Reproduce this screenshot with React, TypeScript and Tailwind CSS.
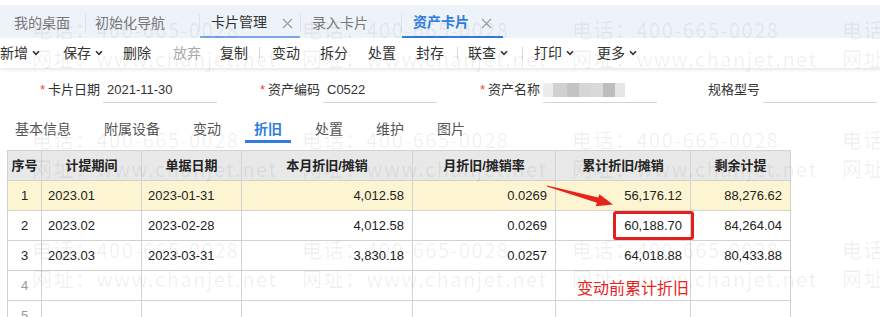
import React from "react";

const Chevron = () => (
  <svg width="8" height="6" viewBox="0 0 8 6" className="ml-[4px]">
    <path d="M1 1.2 L4 4.3 L7 1.2" fill="none" stroke="#333" strokeWidth="1.6" />
  </svg>
);

const Close = ({ color = "#9a9a9a" }: { color?: string }) => (
  <svg width="11" height="11" viewBox="0 0 11 11">
    <path d="M1 1 L10 10 M10 1 L1 10" stroke={color} strokeWidth="1.1" />
  </svg>
);

const ToolSep = ({ ml, mr }: { ml: string; mr: string }) => (
  <div className={`w-px h-[12px] bg-[#d6d6d6] ${ml} ${mr}`} />
);

const Field = ({
  label,
  required,
  children,
}: {
  label: string;
  required?: boolean;
  children?: React.ReactNode;
}) => (
  <div className="w-[220px] flex items-center">
    <div className="w-[100px] flex justify-end items-center text-[13px] text-[#333]">
      {required && <span className="text-[#e8453c] mr-[3px] text-[13px]">*</span>}
      {label}
    </div>
    <div className="ml-[3px] w-[114px] h-[26px] border-b border-[#d4d4d4] flex items-center pl-[4px] text-[13px] text-[#333]">
      {children}
    </div>
  </div>
);

const headers = ["序号", "计提期间", "单据日期", "本月折旧/摊销", "月折旧/摊销率", "累计折旧/摊销", "剩余计提"];
const widths = [34, 100, 100, 171, 143, 135, 100];

const rows = [
  ["1", "2023.01", "2023-01-31", "4,012.58", "0.0269", "56,176.12", "88,276.62"],
  ["2", "2023.02", "2023-02-28", "4,012.58", "0.0269", "60,188.70", "84,264.04"],
  ["3", "2023.03", "2023-03-31", "3,830.18", "0.0257", "64,018.88", "80,433.88"],
  ["4", "", "", "", "", "", ""],
  ["5", "", "", "", "", "", ""],
];

const subTabs = ["基本信息", "附属设备", "变动", "折旧", "处置", "维护", "图片"];

export default function App() {
  return (
    <div className="relative w-[880px] h-[317px] overflow-hidden bg-white font-['Liberation_Sans','Noto_Sans_CJK_SC',sans-serif]">
      <div className="h-[5px] bg-white" />
      {/* page tabs */}
      <div className="h-[33px] bg-[#eef3fa] flex items-stretch text-[14px]">
        <div className="w-[85px] pl-[14px] flex items-center pt-[4px] text-[#777]">我的桌面</div>
        <div className="w-px h-[18px] self-center mt-[3px] bg-[#dce3ee]" />
        <div className="w-[113px] pl-[9px] flex items-center pt-[4px] text-[#777]">初始化导航</div>
        <div className="w-px h-[18px] self-center mt-[3px] bg-[#dce3ee]" />
        <div className="w-[100px] pl-[11px] flex items-center pt-[4px] border-b-[2px] border-[#7aa7e6] text-[#333]">
          卡片管理
          <span className="ml-[15px] mt-[1px]"><Close /></span>
        </div>
        <div className="w-px h-[18px] self-center mt-[3px] bg-[#dce3ee]" />
        <div className="w-[100px] pl-[11px] flex items-center pt-[4px] text-[#777]">录入卡片</div>
        <div className="w-px h-[18px] self-center mt-[3px] bg-[#dce3ee]" />
        <div className="w-[101px] pl-[11px] flex items-center pt-[4px] border-b-[2px] border-[#2f7de1] text-[#2f7de1] font-bold">
          资产卡片
          <span className="ml-[12px] mt-[1px]"><Close /></span>
        </div>
      </div>
      {/* toolbar */}
      <div className="relative z-10 h-[30px] bg-white shadow-[0_2px_3px_rgba(0,0,0,0.09)] flex items-center text-[14px] text-[#333]">
        <div className="flex items-center">新增<Chevron /></div>
        <div className="flex items-center ml-[23px]">保存<Chevron /></div>
        <div className="ml-[20px]">删除</div>
        <div className="ml-[22px] text-[#aaa]">放弃</div>
        <div className="ml-[19px]">复制</div>
        <ToolSep ml="ml-[11px]" mr="mr-[12px]" />
        <div>变动</div>
        <div className="ml-[20px]">拆分</div>
        <div className="ml-[20px]">处置</div>
        <div className="ml-[20px]">封存</div>
        <ToolSep ml="ml-[13px]" mr="mr-[10px]" />
        <div className="flex items-center">联查<Chevron /></div>
        <ToolSep ml="ml-[14px]" mr="mr-[11px]" />
        <div className="flex items-center">打印<Chevron /></div>
        <div className="flex items-center ml-[23px]">更多<Chevron /></div>
      </div>
      {/* form */}
      <div className="flex pt-[9px]">
        <Field label="卡片日期" required>2021-11-30</Field>
        <Field label="资产编码" required>C0522</Field>
        <Field label="资产名称" required>
          <div className="flex h-[14px] -ml-[4px] blur-[0.6px]">
            <div className="w-[10px] bg-[#ececec]" />
            <div className="w-[14px] bg-[#d0d0d0]" />
            <div className="w-[12px] bg-[#c2c4c2]" />
            <div className="w-[12px] bg-[#d6d6d6]" />
            <div className="w-[12px] bg-[#dadada]" />
            <div className="w-[12px] bg-[#bdbdbd]" />
            <div className="w-[10px] bg-[#e6e6e6]" />
          </div>
        </Field>
        <Field label="规格型号" />
      </div>
      {/* sub tabs */}
      <div className="flex pl-[6px] mt-[15px] gap-[15px] text-[14px] text-[#555]">
        {subTabs.map((t) => (
          <div
            key={t}
            className={`h-[25px] px-[9px] flex items-center border-b-[3px] ${
              t === "折旧" ? "border-[#2f7de1] text-[#2f7de1] font-bold" : "border-transparent"
            }`}
          >
            {t}
          </div>
        ))}
      </div>
      {/* table */}
      <div className="pl-[7px] mt-[7px]">
        <table className="table-fixed border-collapse w-[784px] text-[13px] text-[#222]">
          <colgroup>
            {widths.map((w, i) => (
              <col key={i} style={{ width: w }} />
            ))}
          </colgroup>
          <thead>
            <tr className="bg-[#e8e8e8]">
              {headers.map((h) => (
                <th key={h} className="h-[30px] border border-[#d2d2d2] font-bold text-center text-[#222] p-0">
                  {h}
                </th>
              ))}
            </tr>
          </thead>
          <tbody>
            {rows.map((r, ri) => (
              <tr key={ri} className={ri === 0 ? "bg-[#fdf5d2]" : "bg-white"}>
                {r.map((c, ci) => (
                  <td
                    key={ci}
                    className={`h-[30px] border border-[#d2d2d2] p-0 ${
                      ci === 0
                        ? `text-center ${ri > 2 ? "text-[#999]" : ""}`
                        : ci < 3
                        ? "text-left pl-[6px]"
                        : "text-right pr-[8px]"
                    }`}
                  >
                    {c}
                  </td>
                ))}
              </tr>
            ))}
          </tbody>
        </table>
      </div>

      {/* watermark */}
      <div className="absolute inset-0 pointer-events-none z-20 text-[20px] tracking-[1.5px] text-[rgba(0,0,0,0.065)] font-['Noto_Sans_CJK_SC',sans-serif]">
        {[20, 130, 240].map((y) =>
          [32, 302, 572, 842].map((x) => (
            <div key={`${x}-${y}`} className="absolute leading-none whitespace-nowrap" style={{ left: x, top: y }}>
              <div>电话：400-665-0028</div>
              <div className="mt-[9px]">网址：www.chanjet.net</div>
            </div>
          ))
        )}
      </div>

      {/* annotations */}
      <svg className="absolute left-0 top-0 z-30 pointer-events-none" width="880" height="317">
        <polygon
          points="547.1,185.4 598.3,197.6 599.4,194.2 613,204.5 595.8,206.2 596.9,202.8 546.9,186.6"
          fill="#e8231c"
        />
      </svg>
      <div className="absolute z-30 left-[613px] top-[211px] w-[81px] h-[29px] border-[3px] border-[#e3201b] rounded-[3px]" />
      <div className="absolute z-30 left-[577px] top-[277px] text-[16px] text-[#e8231c] font-['Noto_Sans_CJK_SC',sans-serif] leading-[20px]">
        变动前累计折旧
      </div>
    </div>
  );
}
